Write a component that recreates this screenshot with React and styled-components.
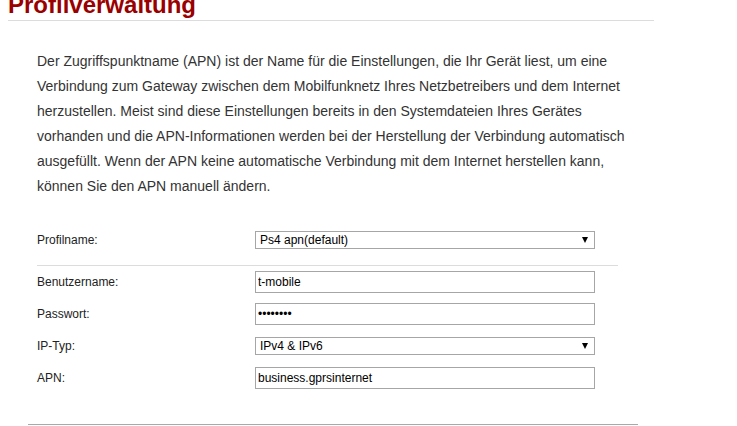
import React from "react";
import styled, { createGlobalStyle } from "styled-components";

const Global = createGlobalStyle`
  html, body { margin: 0; padding: 0; background: #fff; overflow: hidden; }
  body { font-family: "Liberation Sans", Arial, sans-serif; color: #333; }
`;

const Page = styled.div`
  width: 646px;
  margin-left: 8px;
`;

const Title = styled.h1`
  margin: -10px 0 0 0;
  font-size: 24px;
  line-height: 30px;
  font-weight: bold;
  color: #990000;
  border-bottom: 1px solid #dcdcdc;
`;

const Intro = styled.p`
  margin: 28px 0 0 29px;
  width: 590px;
  font-size: 14px;
  line-height: 25px;
  color: #333;
`;

const Form = styled.div`
  margin: 25px 0 0 29px;
  width: 581px;
`;

const Row = styled.div`
  display: grid;
  grid-template-columns: 218px 340px;
  align-items: center;
  height: 32px;
  font-size: 12px;
  color: #222;
`;

const Separator = styled.div`
  height: 1px;
  background: #dcdcdc;
  margin: 9px 0 0 0;
`;

const Label = styled.label`
  font-size: 12px;
`;

const TextInput = styled.input`
  box-sizing: border-box;
  width: 340px;
  height: 22px;
  margin: 0;
  padding: 0 2px;
  border: 1px solid #a6a6a6;
  font-family: "Liberation Sans", Arial, sans-serif;
  font-size: 12px;
  color: #000;
  background: #fff;
  outline: none;
`;

const SelectWrap = styled.div`
  position: relative;
  width: 340px;
  height: 18px;
`;

const Select = styled.select`
  box-sizing: border-box;
  width: 340px;
  height: 18px;
  margin: 0;
  padding: 0 0 0 4px;
  border: 1px solid #a6a6a6;
  border-radius: 0;
  appearance: none;
  -webkit-appearance: none;
  background: #fff;
  font-family: "Liberation Sans", Arial, sans-serif;
  font-size: 12px;
  line-height: 16px;
  color: #000;
  outline: none;
`;

const Arrow = styled.span`
  position: absolute;
  right: 7px;
  top: 6px;
  width: 0;
  height: 0;
  border-left: 3.5px solid transparent;
  border-right: 3.5px solid transparent;
  border-top: 6px solid #000;
  pointer-events: none;
`;

const Footer = styled.div`
  height: 1px;
  background: #a9a9a9;
  margin: 30px 0 0 20px;
  width: 610px;
`;

const Dropdown = ({ value }) => (
  <SelectWrap>
    <Select defaultValue={value}>
      <option value={value}>{value}</option>
    </Select>
    <Arrow />
  </SelectWrap>
);

export default function App() {
  return (
    <>
      <Global />
      <Page>
        <Title>Profilverwaltung</Title>
        <Intro>
          Der Zugriffspunktname (APN) ist der Name für die Einstellungen, die Ihr Gerät liest, um eine
          Verbindung zum Gateway zwischen dem Mobilfunknetz Ihres Netzbetreibers und dem Internet
          herzustellen. Meist sind diese Einstellungen bereits in den Systemdateien Ihres Gerätes
          vorhanden und die APN-Informationen werden bei der Herstellung der Verbindung automatisch
          ausgefüllt. Wenn der APN keine automatische Verbindung mit dem Internet herstellen kann,
          können Sie den APN manuell ändern.
        </Intro>
        <Form>
          <Row>
            <Label>Profilname:</Label>
            <Dropdown value="Ps4 apn(default)" />
          </Row>
          <Separator />
          <Row>
            <Label>Benutzername:</Label>
            <TextInput type="text" defaultValue="t-mobile" />
          </Row>
          <Row>
            <Label>Passwort:</Label>
            <TextInput type="password" defaultValue="12345678" />
          </Row>
          <Row>
            <Label>IP-Typ:</Label>
            <Dropdown value="IPv4 & IPv6" />
          </Row>
          <Row>
            <Label>APN:</Label>
            <TextInput type="text" defaultValue="business.gprsinternet" />
          </Row>
        </Form>
        <Footer />
      </Page>
    </>
  );
}
